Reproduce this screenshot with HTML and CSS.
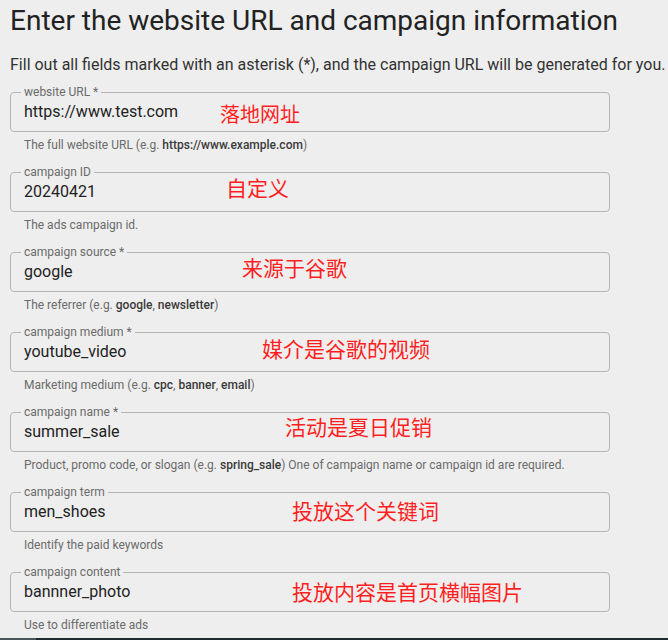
FILE: index.html
```html
<!DOCTYPE html>
<html lang="zh">
<head>
    <meta charset="UTF-8">
    <meta name="viewport" content="width=device-width, initial-scale=1.0">
    <title>Campaign URL Builder</title>
    <link rel="stylesheet" href="styles.css">
</head>
<body>
    <div class="builder">
        <h1>Enter the website URL and campaign information</h1>
        <p class="intro">Fill out all fields marked with an asterisk (*), and the campaign URL will be generated for you.</p>

        <!-- website URL -->
        <div class="field">
            <fieldset>
                <legend>website URL *</legend>
                <input type="text" value="https://www.test.com">
            </fieldset>
            <span class="note note-url">落地网址</span>
            <p class="hint">The full website URL (e.g. <b>https://www.example.com</b>)</p>
        </div>

        <div class="field">
            <fieldset>
                <legend>campaign ID</legend>
                <input type="text" value="20240421">
            </fieldset>
            <span class="note note-id">自定义</span>
            <p class="hint">The ads campaign id.</p>
        </div>

        <div class="field">
            <fieldset>
                <legend>campaign source *</legend>
                <input type="text" value="google">
            </fieldset>
            <span class="note note-source">来源于谷歌</span>
            <p class="hint">The referrer (e.g. <b>google</b>, <b>newsletter</b>)</p>
        </div>

        <div class="field">
            <fieldset>
                <legend>campaign medium *</legend>
                <input type="text" value="youtube_video">
            </fieldset>
            <span class="note note-medium">媒介是谷歌的视频</span>
            <p class="hint">Marketing medium (e.g. <b>cpc</b>, <b>banner</b>, <b>email</b>)</p>
        </div>

        <div class="field">
            <fieldset>
                <legend>campaign name *</legend>
                <input type="text" value="summer_sale">
            </fieldset>
            <span class="note note-name">活动是夏日促销</span>
            <p class="hint">Product, promo code, or slogan (e.g. <b>spring_sale</b>) One of campaign name or campaign id are required.</p>
        </div>

        <div class="field">
            <fieldset>
                <legend>campaign term</legend>
                <input type="text" value="men_shoes">
            </fieldset>
            <span class="note note-term">投放这个关键词</span>
            <p class="hint">Identify the paid keywords</p>
        </div>

        <div class="field">
            <fieldset>
                <legend>campaign content</legend>
                <input type="text" value="bannner_photo">
            </fieldset>
            <span class="note note-content">投放内容是首页横幅图片</span>
            <p class="hint">Use to differentiate ads</p>
        </div>
    </div>

    <!-- 底部任務列邊緣 -->
    <div class="taskbar-edge"></div>
</body>
</html>
```

FILE: styles.css
```css
/* 基本樣式 */
body {
    font-family: Roboto, "Liberation Sans", Arial, sans-serif;
    background-color: #eeeeee;
    margin: 0;
    padding: 0;
    overflow: hidden;
}

.builder {
    padding: 0 0 0 10px;
}

h1 {
    font-size: 28px;
    font-weight: 400;
    line-height: 36px;
    color: #222;
    margin: 0;
    padding-top: 3px;
}

.intro {
    font-size: 16px;
    line-height: 20px;
    color: #333;
    margin: 16px 0 10px;
}

/* 欄位 */
.field {
    position: relative;
    width: 600px;
    height: 80px;
}

fieldset {
    border: 1px solid #b3b3b3;
    border-radius: 4px;
    margin: 0;
    padding: 0 13px;
    height: 47px;
    box-sizing: border-box;
}

legend {
    font-size: 12px;
    line-height: 14px;
    color: #6b6b6b;
    padding: 0 3px;
    margin-left: -3px;
}

input[type="text"] {
    display: block;
    width: 100%;
    border: none;
    background: transparent;
    outline: none;
    padding: 0;
    margin: 0;
    font-family: Roboto, "Liberation Sans", Arial, sans-serif;
    font-size: 16px;
    line-height: 22px;
    height: 24px;
    color: #222;
}

.hint {
    font-size: 12px;
    line-height: 16px;
    color: #6b6b6b;
    margin: 5px 0 0 14px;
}

.hint b {
    font-weight: 500;
    color: #3a3a3a;
}

/* 紅色中文標註 */
.note {
    position: absolute;
    font-family: "Noto Sans CJK SC", sans-serif;
    font-size: 21px;
    line-height: 24px;
    color: #ff1f1f;
    white-space: nowrap;
}

.note-url { left: 210px; top: 17px; font-size: 20px; }
.note-id { left: 216px; top: 10px; }
.note-source { left: 232px; top: 10px; }
.note-medium { left: 252px; top: 11px; }
.note-name { left: 275px; top: 9px; }
.note-term { left: 282px; top: 13px; }
.note-content { left: 282px; top: 14px; }

.taskbar-edge {
    position: fixed;
    left: 0;
    right: 0;
    bottom: 0;
    height: 2px;
    background: linear-gradient(to right, #4a5559 36px, #1f2b2f 36px);
}
```
